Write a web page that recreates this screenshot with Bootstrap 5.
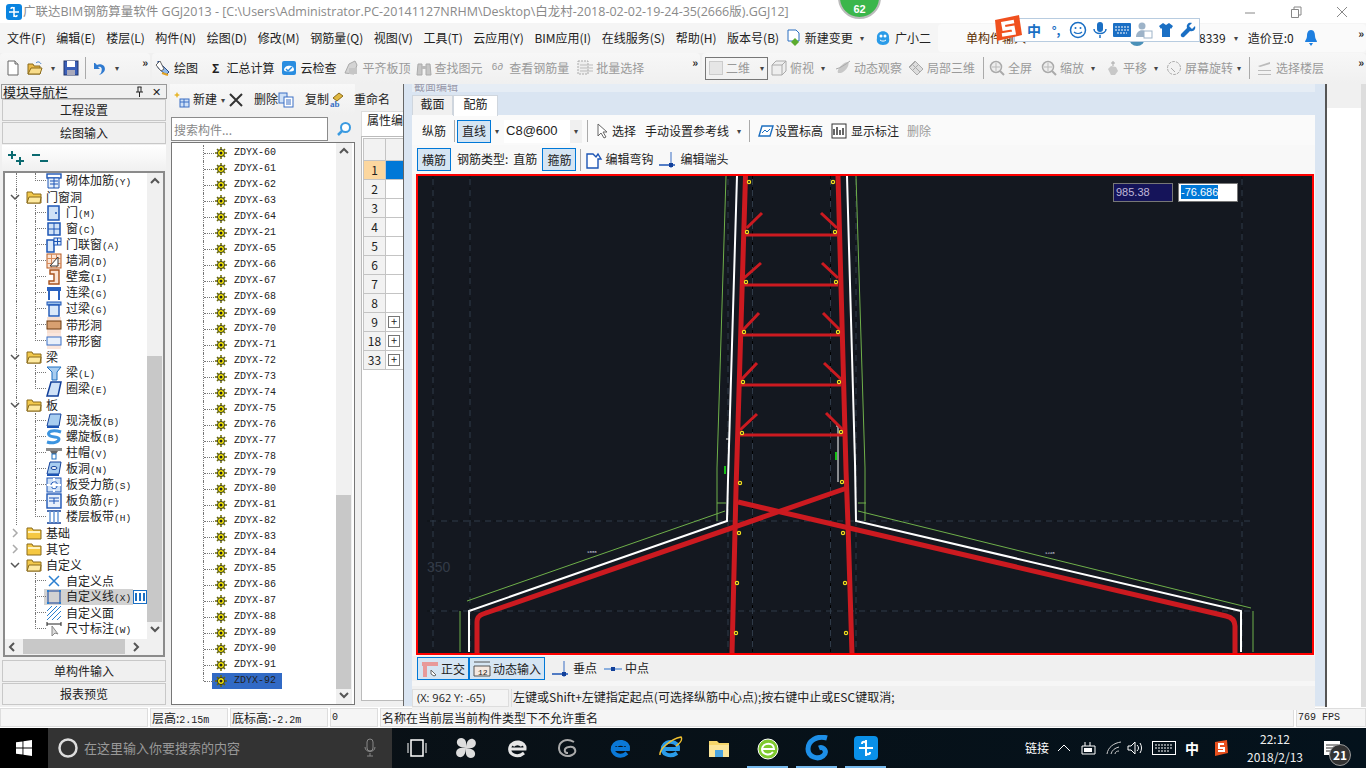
<!DOCTYPE html>
<html lang="zh-CN">
<head>
<meta charset="UTF-8">
<title>广联达BIM钢筋算量软件 GGJ2013</title>
<link href="https://cdn.jsdelivr.net/npm/bootstrap@5.3.0/dist/css/bootstrap.min.css" rel="stylesheet">
<style>
html,body{width:1366px;height:768px;overflow:hidden}
body{font-family:"Noto Sans CJK SC","Liberation Sans",sans-serif;font-size:12px;color:#222;background:#f0f0f0;line-height:1.2}
svg{flex:none;display:block}
.sp0{margin-left:0}.sp1{margin-left:1px}.sp2{margin-left:2px}.sp3{margin-left:3px}.sp4{margin-left:4px}.sp5{margin-left:5px}.sp6{margin-left:6px}.sp7{margin-left:7px}.sp8{margin-left:8px}.sp9{margin-left:9px}.sp10{margin-left:10px}.sp14{margin-left:14px}.sp16{margin-left:16px}.sp19{margin-left:19px}.sp53{margin-left:53px}.sp135{margin-left:135px}
.app-shell{width:1366px;height:768px;position:relative}
.title-bar{height:23px;background:#fff;color:#8a8a8a;padding-left:6px;gap:1px;font-family:"Open Sans","Noto Sans CJK SC",sans-serif;font-size:12.5px;white-space:nowrap}
.win-ctl{margin-left:auto;gap:32px;padding-right:17px}
.menu-bar{height:30px;background:#f5f5f5;padding-left:7px;gap:10.6px;white-space:nowrap;position:relative}
.menu-bar .pull-a{margin-left:-6px}
.menu-bar .pull-b{margin-left:-4px}
.menu-side{position:absolute;left:938px;top:1px;width:428px;height:28px;background:#fafafa;border-radius:4px;padding-left:28px}
.side-name{color:#5a2d00}
.menu-tail{position:absolute;right:0;top:0;height:28px;left:190px}
.tool-bar{height:30px;background:#f0f0f0;white-space:nowrap;gap:2px}
.tool-grp{height:30px;background:linear-gradient(#f7f7f7,#f0f0f0);border-radius:4px;padding-left:3px}
.grp-a{width:150px;padding-left:5px}.grp-b{width:548px}.grp-c{width:664px}
.muted-t{color:#9a9a9a}
.t-item{display:flex;align-items:center;gap:3px}
.caret-d{font-size:8px;color:#444;width:10px;text-align:center;line-height:1;flex:none}
.more-g{font-size:11px;font-weight:700;letter-spacing:-1px;margin-left:auto;padding-right:3px;align-self:flex-start;padding-top:3px;color:#222}
.t-sep{width:1px;height:22px;background:#aaa;flex:none}
.view-select{width:63px;height:23px;border:1px solid #777;gap:3px;padding-left:3px;color:#999}
.main-area{height:624px;position:relative;padding-top:1px}
.left-pane{width:167px;margin-right:3px;flex:none}
.pane-title{height:15px;border:1px solid #999;background:#f0f0f0;font-size:13px;line-height:13px;padding-left:1px;margin-left:1px}
.pane-x{margin-left:auto;gap:8px;padding-right:5px;font-size:11px;align-items:center}
.side-btn{height:22px;width:164px;margin-left:2px;margin-bottom:1px;background:#f0f0f0;border:1px solid #c8c8c8;border-radius:0;padding:0;font-size:12px;color:#222;line-height:20px}
.tree-tools{height:26px;margin:1px 0 0 2px;width:164px;background:linear-gradient(#fff,#f0f0f0);padding-left:5px;gap:6px}
.tree-box{height:486px;width:162px;margin:0 0 3px 3px;border:2px solid #8b8b8b;background:#fff;position:relative}
.tree-body{height:468px;overflow:hidden;width:143px}
.tree-row{height:16px;position:relative;white-space:nowrap;gap:4px}
.tree-row.lv1{padding-left:3px}
.tree-row.lv2{padding-left:41px}
.tree-row.vline::before{content:"";position:absolute;left:11px;top:0;bottom:0;border-left:1px dotted #777}
.tree-row.lv2::after{content:"";position:absolute;left:30px;top:0;width:11px;height:8px;border-left:1px dotted #777;border-bottom:1px dotted #777}
.conn-cont{position:absolute;left:30px;top:8px;bottom:0;border-left:1px dotted #777}
.key-t{font-family:"Liberation Mono",monospace;font-size:9.5px}
.row-hot{background:#d2d2d2;height:16px;gap:4px;margin-left:-2px;padding-left:2px;width:89px}
.hot-tail{margin-left:-4px}
.scroll-v{position:absolute;right:0;top:0;width:16px;height:468px;background:#f0f0f0}
.scroll-thumb{position:absolute;left:0;width:15px;background:#c8c8c8}
.thumb-nav{top:183px;height:266px}
.thumb-navh{left:18px;top:0;width:102px;height:15px}
.thumb-list{top:352px;height:194px}
.scroll-h{position:absolute;left:0;right:0;bottom:0;height:16px;background:#f0f0f0}
.arrow-g{position:absolute}
.ar-up{left:2px;top:4px}.ar-dn-a{left:2px;top:452px}.ar-dn-b{left:2px;top:548px}.ar-l{left:3px;top:2px}.ar-r{left:127px;top:2px}
.mid-pane{width:185px;flex:none}
.mid-tools{height:31px;padding:0 0 0 4px;white-space:nowrap;background:linear-gradient(#f8f8f8,#f0f0f0)}
.find-row{height:24px;margin:2px 0 1px 1px;gap:1px}
.find-row .find-input{width:157px;flex:none;height:24px;border:1px solid #8b8b8b;border-radius:0;padding:0 2px;font-size:12px;color:#888;min-height:0}
.find-input::placeholder{color:#888}
.list-box{height:563px;border:1px solid #777;background:#fff;position:relative;margin-left:1px}
.zd-row{height:16px;padding-left:43px;gap:7px;font-family:"Liberation Mono",monospace;font-size:10px;position:relative;color:#222;width:110px;white-space:nowrap}
.zd-row::before{content:"";position:absolute;left:31px;top:0;bottom:0;border-left:1px dotted #777}
.zd-row::after{content:"";position:absolute;left:32px;top:8px;width:10px;border-top:1px dotted #777}
.zd-row.last-z::before{bottom:8px}
.zd-row.on{background:linear-gradient(90deg,transparent 40px,#316ac5 40px)}
.list-inner{padding-top:2px;height:100%;overflow:hidden}
.list-scroll{position:absolute;right:2px;top:0;bottom:0;width:16px;background:#f0f0f0}
.prop-pane{width:0;flex:1 1 auto;padding:27px 0 0 6px}
.prop-tab{width:60px;height:25px;background:#fff;border:1px solid #ddd;border-bottom:0;padding:1px 5px;white-space:nowrap}
.grid-wrap{background:#fff;border:1px solid #bbb;padding:1px 0 0 1px;height:565px}
.grid-t{width:60px;border-collapse:collapse;table-layout:fixed;margin:0}
.grid-t td{height:19px;padding:0;border:1px solid #c4c4c4;text-align:center;background:#fff}
.grid-t .num-c{width:22px;background:#f2f2f2}
.grid-t .num-on{background:#fcd79f}
.grid-t .cell-on{background:#0078d7}
.grid-t .plain-c{text-align:left;padding-left:2px}
.grid-t .head-r td{height:22px;background:#f2f2f2}
.plus-box{display:block;width:12px;height:12px;border:1px solid #777;line-height:9px;font-size:11px;background:#fff;text-align:center}
.far-pane{width:41px;flex:none;border-left:2px solid #555;background:linear-gradient(#f0f0f0 24px,#fff 24px);border-right:5px solid #ddd;position:relative}
.edit-dialog{position:absolute;left:403px;top:1px;width:922px;height:622px;background:#dae5f2;border-left:1px solid #666;padding:0 10px 0 8px}
.dlg-cap{height:8px;font-size:11px;color:#99a;overflow:hidden;line-height:5px;padding-left:2px;background:#e6edf5}
.dlg-tabs{height:20px;margin-top:3px}
.dlg-tab{width:41px;height:20px;text-align:center;background:#f0f0f0;border:1px solid #cfd6de;border-bottom:0;padding-top:1px}
.dlg-tab.active-t{background:#fff;width:45px;height:21px;position:relative;z-index:1}
.dlg-body{background:#f6f6f6;height:592px}
.cmd-a{height:30px;padding:2px 0 0 10px;white-space:nowrap;background:#fafafa}
.cmd-b{height:29px;padding:0 0 0 5px;white-space:nowrap;background:#f8f8f8}
.tog-btn{background:#d5e5f3;border:1px solid #0078d7;border-radius:0;padding:0 4px;height:23px;line-height:20px;font-size:12px;color:#222;flex:none}
.rebar-sel{width:78px;height:23px;background:#fff;font-family:"Liberation Sans",sans-serif;padding-left:2px;font-size:13px}
.rebar-sel .caret-d{margin-left:auto;background:#f0f0f0;height:23px;line-height:23px;width:12px}
.cad-wrap{width:898px;height:481px;border:2px solid #f00;margin-left:4px;background:#141820;display:block;overflow:hidden}
.cad-wrap svg{width:894px;height:477px}
.dyn-a,.dyn-b{position:absolute;top:99px;width:60px;height:19px;border:1px solid #777;font-family:"Liberation Sans",sans-serif;font-size:11px;line-height:17px;padding-left:2px}
.dyn-a{left:709px;background:#15145a;color:#c0b8d8}
.dyn-b{left:774px;background:#fff;color:#fff}
.dyn-b span{background:#0078d7;padding:1px 0}
.snap-row{height:25px;margin-top:1px;padding-left:5px;white-space:nowrap;background:#f0f0f0}
.snap-row .tog-btn{height:23px;padding:0 3px;gap:2px;display:flex;align-items:center}
.hint-row{height:24px;margin-top:5px;gap:2px;white-space:nowrap;background:#f0f0f0}
.hint-xy{width:97px;height:18px;background:#f4f4f4;border:1px solid #ddd;padding-left:4px;font-family:"Open Sans",sans-serif;font-size:11px;line-height:16px}
.hint-msg{padding-left:1px;border-left:1px solid #ddd;height:18px;line-height:16px}
.stat-bar{height:21px;padding-top:1px;gap:2px;background:#fff}
.stat-cell{height:19px;background:#f5f5f5;border:1px solid #ddd;padding-left:1px;white-space:nowrap;line-height:17px}
.stat-mono{font-family:"Liberation Mono",monospace;font-size:10px}
.sc-a{width:148px}.sc-b{width:78px}.sc-c{width:98px}.sc-d{width:48px}.sc-e{width:914px}.sc-f{width:70px}
.task-bar{height:40px;background:linear-gradient(90deg,#0b1014,#04121c);color:#fff;position:relative}
.start-btn{width:48px;height:40px;background:#000;flex:none}
.search-box{width:344px;height:40px;background:#333;color:#999;padding-left:9px;gap:5px;font-size:13px;flex:none}
.task-apps{padding-left:13px}
.task-app{width:49px;height:40px;position:relative;flex:none}
.task-app.first-a{width:36px}
.task-app.run-on::after{content:"";position:absolute;left:4px;right:4px;bottom:0;height:2px;background:#76b9ed}
.tray-zone{font-size:12px}
.tray-zh{font-size:14px;font-weight:700;width:14px}
.clock-t{text-align:center;font-size:12px;line-height:18px;width:60px;color:#eee}
.float-badge{position:absolute;left:838px;top:-24px;width:43px;height:43px;border-radius:50%;background:#3bb64b;border:2px solid #bbb;color:#fff;font-weight:700;font-size:11px;text-align:center;padding-top:25px;font-family:"Liberation Sans",sans-serif;line-height:12px}
.ime-bar{position:absolute;left:1014px;top:18px;width:186px;height:24px;background:#fff;border:1px solid #b8cce0;padding-left:8px;color:#1a6fc4;font-weight:700}
.ime-cell{width:22px;display:flex;align-items:center;justify-content:center;flex:none}
.ime-zh{font-size:14px}
.ime-logo{position:absolute;left:993px;top:14px}
.notif-b{position:absolute;left:1329px;top:16px;width:22px;height:22px;border-radius:50%;background:#333;border:1px solid #999;font-size:12px;font-weight:700;text-align:center;line-height:20px}
</style>
</head>
<body>
<svg width="0" height="0" class="position-absolute">
<defs>
<symbol id="i-folder" viewBox="0 0 16 16"><path d="M1 3h5l1 2h8v9H1z" fill="#f2c94c" stroke="#8a6a1a"/><path d="M1 14l2-6h12l-1 6z" fill="#fde9a0" stroke="#8a6a1a"/></symbol>
<symbol id="i-shut" viewBox="0 0 16 16"><path d="M1 3h5l1 2h8v9H1z" fill="#f5c842" stroke="#8a6a1a"/><path d="M2 6h12v2H2z" fill="#fff3c0"/></symbol>
<symbol id="i-door" viewBox="0 0 16 16"><rect x="2" y="1" width="11" height="14" fill="#cfe1f7" stroke="#1d55b5" stroke-width="1.5"/><circle cx="10" cy="8" r="1" fill="#1d55b5"/></symbol>
<symbol id="i-win" viewBox="0 0 16 16"><rect x="2" y="2" width="12" height="12" fill="#cfe1f7" stroke="#1d55b5" stroke-width="1.5"/><path d="M8 2v12M2 8h12" stroke="#1d55b5"/></symbol>
<symbol id="i-doorwin" viewBox="0 0 16 16"><rect x="1" y="3" width="7" height="12" fill="#dbe9fa" stroke="#1d55b5" stroke-width="1.5"/><rect x="8" y="1" width="7" height="7" fill="#dbe9fa" stroke="#1d55b5"/><path d="M11.500 1v7M8 4.500h7" stroke="#1d55b5"/></symbol>
<symbol id="i-masonry" viewBox="0 0 16 16"><rect x="1" y="1" width="14" height="4" fill="#fff" stroke="#1d55b5" stroke-width="1.400"/><path d="M2 5h11v10H2zM4 8h8M4 11h8M8 5v10" fill="#e6f0fb" stroke="#1d55b5"/></symbol>
<symbol id="i-hole" viewBox="0 0 16 16"><rect x="1" y="1" width="14" height="14" fill="#fbe4d4" stroke="#b85a20"/><path d="M1 5.500h14M1 10.500h14M5.500 1v14M10.500 1v14" stroke="#d88a5a"/><path d="M4 13l8-9v9z" fill="#fff" stroke="#333"/></symbol>
<symbol id="i-niche" viewBox="0 0 16 16"><path d="M4 1h9v14H3v-3h5V5H4z" fill="#fbe4d4" stroke="#a8521c" stroke-width="1.4"/></symbol>
<symbol id="i-lintel" viewBox="0 0 16 16"><rect x="1" y="2" width="14" height="4" fill="#2a62c0"/><path d="M3 6v9M13 6v9" stroke="#2a62c0" stroke-width="2"/></symbol>
<symbol id="i-over" viewBox="0 0 16 16"><rect x="1" y="1" width="14" height="3" fill="#9cc0ea" stroke="#1d55b5"/><rect x="3" y="4" width="10" height="11" fill="#dbe9fa" stroke="#1d55b5" stroke-width="1.4"/></symbol>
<symbol id="i-strip" viewBox="0 0 16 16"><rect x="1" y="0" width="14" height="16" fill="#f8dfd0"/><rect x="1" y="4" width="14" height="8" fill="#d8a070" stroke="#6a3a10"/></symbol>
<symbol id="i-stripw" viewBox="0 0 16 16"><rect x="1" y="0" width="14" height="16" fill="#fbe6dc"/><rect x="1" y="4" width="14" height="8" fill="#e8f0fb" stroke="#3a6fc4"/></symbol>
<symbol id="i-beam" viewBox="0 0 16 16"><path d="M1 2h14l-4 5v8H6V7z" fill="#a8cdf0" stroke="#1d6fc0"/></symbol>
<symbol id="i-ring" viewBox="0 0 16 16"><path d="M5 1h10l-3 14H1z" fill="#cfe1f7" stroke="#12409a" stroke-width="1.500"/></symbol>
<symbol id="i-slab" viewBox="0 0 16 16"><path d="M4 1h11l-2 12H1z" fill="#a8cdf0" stroke="#12409a"/><path d="M1 13h12v2H1z" fill="#1d55b5"/></symbol>
<symbol id="i-spiral" viewBox="0 0 16 16"><path d="M15 3C6 0 1 3 3 6s10 1 10 4-6 5-12 3" fill="none" stroke="#3b94e0" stroke-width="3"/></symbol>
<symbol id="i-cap" viewBox="0 0 16 16"><rect x="0" y="3" width="16" height="3" fill="#8c8c8c"/><path d="M4 6h8l-2 3H6z" fill="#666"/><rect x="6" y="9" width="4" height="5" fill="#fff" stroke="#1d6fc0"/></symbol>
<symbol id="i-slabh" viewBox="0 0 16 16"><path d="M4 1h11l-2 12H1z" fill="#a8cdf0" stroke="#12409a"/><ellipse cx="8" cy="7" rx="3" ry="1.500" fill="#fff" stroke="#12409a"/><path d="M1 13h12v2H1z" fill="#1d55b5"/></symbol>
<symbol id="i-force" viewBox="0 0 16 16"><rect x="1" y="1" width="14" height="14" fill="#cfe1f7" stroke="#1d55b5"/><path d="M1 8h14M8 1v14" stroke="#fff" stroke-width="2"/><path d="M5 8c0-4 7-4 6-1M11 9c0 4-6 3-5 1" fill="none" stroke="#1d55b5"/></symbol>
<symbol id="i-neg" viewBox="0 0 16 16"><rect x="1" y="1" width="14" height="14" fill="#e8f0fb" stroke="#1d55b5" stroke-width="1.400"/><path d="M3 8h10M8 5v6M3 5h10" stroke="#1d55b5"/></symbol>
<symbol id="i-band" viewBox="0 0 16 16"><path d="M1 2h14M1 14h14" stroke="#12409a" stroke-width="1.500"/><path d="M4 2v12M8 2v12M12 2v12" stroke="#6a9ad8" stroke-width="1.500"/></symbol>
<symbol id="i-point" viewBox="0 0 16 16"><path d="M3 3l10 10M13 3L3 13" stroke="#2a7fd0" stroke-width="1.500"/></symbol>
<symbol id="i-line" viewBox="0 0 16 16"><rect x="2" y="2" width="12" height="12" fill="none" stroke="#12409a"/><path d="M1 1h2v2H1zM13 1h2v2h-2zM1 13h2v2H1zM13 13h2v2h-2z" fill="#2a7fd0"/></symbol>
<symbol id="i-face" viewBox="0 0 16 16"><path d="M1 6L6 1M1 11L11 1M1 15L15 1M6 15L15 6M11 15l4-4" stroke="#2a7fd0"/></symbol>
<symbol id="i-dim" viewBox="0 0 16 16"><path d="M1 1v4M15 1v4M1 3h14" stroke="#222"/><path d="M6 5v10l3-3 3 1z" fill="#ddd" stroke="#888"/></symbol>
<symbol id="i-gear" viewBox="0 0 12 12"><circle cx="6" cy="6" r="3.500" fill="#fff200" stroke="#222"/><circle cx="6" cy="6" r="1.500" fill="#222"/><path d="M6 0v2M6 10v2M0 6h2M10 6h2M2 2l1.400 1.400M8.600 8.600L10 10M10 2L8.600 3.400M3.400 8.600L2 10" stroke="#6a6a00" stroke-width="1.500"/></symbol>
<symbol id="i-doc" viewBox="0 0 16 16"><path d="M3 1h7l3 3v11H3z" fill="#fff" stroke="#666"/><path d="M10 1v3h3" fill="#ddd" stroke="#666"/></symbol>
<symbol id="i-open" viewBox="0 0 16 16"><path d="M1 4h5l1 2h6v8H1z" fill="#e9b949" stroke="#8a6a1a"/><path d="M1 14l3-6h11l-2 6z" fill="#f8dc8a" stroke="#8a6a1a"/><path d="M9 3c2-2 4-1 5 1" fill="none" stroke="#3a7ac8"/></symbol>
<symbol id="i-save" viewBox="0 0 16 16"><rect x="1" y="1" width="14" height="14" fill="#3a5fb8" stroke="#20356a"/><rect x="4" y="1" width="8" height="6" fill="#fff"/><rect x="4" y="10" width="8" height="5" fill="#aab"/></symbol>
<symbol id="i-undo" viewBox="0 0 16 16"><path d="M3 3v6h6L7 7c3-1 5 1 3 6l-2 2c6-2 7-6 5-9-2-2-5-2-7-1L4 3z" fill="#2f7ad0"/></symbol>
<symbol id="i-draw" viewBox="0 0 16 16"><path d="M3 1l5 5 6 6-3 3-8-7z" fill="#8fb8e8" stroke="#2a4f90"/><path d="M1 5l4-4 4 8-3 2z" fill="#fff" stroke="#666"/><path d="M7 13l6 2" stroke="#e0a020" stroke-width="2"/></symbol>
<symbol id="i-cloud" viewBox="0 0 16 16"><rect x="1" y="1" width="14" height="14" rx="2" fill="#2a8de0"/><path d="M3 10c0-5 10-6 10 0 0 2-10 2-10 0z" fill="#fff"/><path d="M5 9l2 2 4-4" fill="none" stroke="#2a8de0" stroke-width="1.500"/></symbol>
<symbol id="i-gray1" viewBox="0 0 16 16"><path d="M2 13l4-9 6-3 2 4-3 9z" fill="#d4d4d4" stroke="#aaa"/><rect x="6" y="8" width="8" height="6" fill="#c6c6c6"/></symbol>
<symbol id="i-binoc" viewBox="0 0 16 16"><path d="M2 4h4v11H1zM10 4h4l1 11h-5z" fill="#c6c6c6" stroke="#aaa"/><rect x="6" y="6" width="4" height="3" fill="#bbb"/></symbol>
<symbol id="i-batch" viewBox="0 0 16 16"><rect x="1" y="1" width="10" height="13" fill="#eee" stroke="#aaa" stroke-dasharray="2 1"/><path d="M3 5h13M3 8h13M3 11h13" stroke="#bbb"/></symbol>
<symbol id="i-cube" viewBox="0 0 16 16"><path d="M1 5l4-4h10v10l-4 4H1zM1 5h10v10M11 5l4-4" fill="#eee" stroke="#aaa"/></symbol>
<symbol id="i-orbit" viewBox="0 0 16 16"><path d="M3 13c-2-3 5-11 10-11 2 1-1 9-7 11z" fill="#c8c8c8"/><path d="M1 9c4-1 9-4 14-8" stroke="#aaa" fill="none"/></symbol>
<symbol id="i-box3" viewBox="0 0 16 16"><path d="M1 7l6-6 8 8-6 6z" fill="#ddd" stroke="#aaa"/><path d="M4 4l8 8M7 2l-5 5M10 5l-5 5" stroke="#aaa"/></symbol>
<symbol id="i-zoom" viewBox="0 0 16 16"><circle cx="7" cy="7" r="5.500" fill="#eee" stroke="#aaa" stroke-width="1.500"/><path d="M11 11l4 4" stroke="#aaa" stroke-width="2"/><path d="M3 7h8M7 3v8" stroke="#bbb"/></symbol>
<symbol id="i-hand" viewBox="0 0 16 16"><path d="M4 9l3-3 5 1 2 4-3 4H7z" fill="#c8c8c8"/><path d="M9 1v5M7 3h4" stroke="#aaa"/></symbol>
<symbol id="i-rot" viewBox="0 0 16 16"><circle cx="8" cy="8" r="6.500" fill="#f2f2f2" stroke="#aaa" stroke-dasharray="3 1"/><path d="M5 8l4 4" stroke="#aaa"/></symbol>
<symbol id="i-floors" viewBox="0 0 16 16"><path d="M1 6l12-4v2L3 7M1 10h13v1H1zM1 14h13v1H1z" fill="#bbb"/></symbol>
<symbol id="i-new" viewBox="0 0 16 16"><path d="M3 0l1 2 2 1-2 1-1 2-1-2-2-1 2-1z" fill="#e8b830"/><rect x="6" y="7" width="9" height="8" fill="#cfe1f7" stroke="#3a6fc4"/><path d="M6 10h9M10 7v8" stroke="#3a6fc4"/></symbol>
<symbol id="i-copy" viewBox="0 0 16 16"><rect x="1" y="1" width="8" height="10" fill="#cfe1f7" stroke="#3a6fc4"/><rect x="6" y="5" width="9" height="10" fill="#fff" stroke="#3a6fc4"/><path d="M8 8h5M8 10h5M8 12h5" stroke="#3a6fc4"/></symbol>
<symbol id="i-rename" viewBox="0 0 16 16"><path d="M4 6l6-5 4 3-6 5z" fill="#e0b840" stroke="#8a6a1a"/><text x="1" y="15" font-size="9" font-weight="700" fill="#3a6fc4" font-family="Liberation Serif">ab</text></symbol>
<symbol id="i-arrow" viewBox="0 0 16 16"><path d="M4 1v12l3-3 3 5 2-1-3-5h4z" fill="#fff" stroke="#666"/></symbol>
<symbol id="i-level" viewBox="0 0 18 16"><path d="M2 13L5 3h11l-3 10z" fill="#fff" stroke="#1d6fc0" stroke-width="1.400"/><path d="M5 10l3-3 2 2 3-3" fill="none" stroke="#1d6fc0"/></symbol>
<symbol id="i-note" viewBox="0 0 16 16"><rect x="1" y="1" width="14" height="14" fill="#fff" stroke="#333"/><path d="M3 12V6M6 12V4M9 12V7M12 12V5" stroke="#333" stroke-width="1.500"/></symbol>
<symbol id="i-hook" viewBox="0 0 18 18"><path d="M2 3h6l3 3 2-3 3 5h-3v9H2z" fill="#fff" stroke="#1d55b5" stroke-width="1.400"/></symbol>
<symbol id="i-perp" viewBox="0 0 18 18"><path d="M0 14h16" stroke="#1d55b5" stroke-width="1.500"/><path d="M12 1v16" stroke="#3a6fc4"/><rect x="10" y="12" width="4" height="4" fill="#12409a"/></symbol>
<symbol id="i-mid" viewBox="0 0 18 18"><path d="M0 9h18" stroke="#6a9ad8" stroke-width="1.500"/><rect x="7" y="7" width="4" height="4" fill="#12409a"/></symbol>
<symbol id="i-ortho" viewBox="0 0 18 18"><path d="M1 2h16v4H6v11H2V6H1z" fill="#e89a9a"/><path d="M10 10l5 5-2 1-3-2z" fill="#fff" stroke="#666"/></symbol>
<symbol id="i-dyn" viewBox="0 0 18 18"><path d="M1 2h16M1 6h16M1 6v10h16V6" fill="#f4e8e0" stroke="#555"/><text x="5" y="15" font-size="8" fill="#222" font-family="Liberation Mono">12</text></symbol>
<symbol id="i-mag" viewBox="0 0 16 16"><circle cx="9.500" cy="6.500" r="4.500" fill="#fff" stroke="#3a9ae0" stroke-width="2"/><path d="M6 10l-4 4" stroke="#3a9ae0" stroke-width="2.500"/></symbol>
<symbol id="c-up" viewBox="0 0 12 8"><path d="M2 6l4-4 4 4" fill="none" stroke="#555" stroke-width="2"/></symbol>
<symbol id="c-dn" viewBox="0 0 12 8"><path d="M2 2l4 4 4-4" fill="none" stroke="#555" stroke-width="2"/></symbol>
<symbol id="c-lt" viewBox="0 0 8 12"><path d="M6 2L2 6l4 4" fill="none" stroke="#555" stroke-width="2"/></symbol>
<symbol id="c-rt" viewBox="0 0 8 12"><path d="M2 2l4 4-4 4" fill="none" stroke="#555" stroke-width="2"/></symbol>
</defs>
</svg>

<div class="app-shell d-flex flex-column">
  <div class="title-bar d-flex align-items-center">
    <svg width="16" height="16" viewBox="0 0 16 16"><rect width="16" height="16" rx="3" fill="#0a84e0"/><path d="M8 3v10M3 8h10M5 5c0-2 2-2 3 0M11 11c0 2-2 2-3 0" fill="none" stroke="#fff" stroke-width="1.500"/></svg>
    <span>广联达BIM钢筋算量软件 GGJ2013 - [C:\Users\Administrator.PC-20141127NRHM\Desktop\白龙村-2018-02-02-19-24-35(2666版).GGJ12]</span>
    <div class="win-ctl d-flex align-items-center">
      <svg width="14" height="14" viewBox="0 0 14 14"><path d="M2 8h10" stroke="#888"/></svg>
      <svg width="14" height="14" viewBox="0 0 14 14"><path d="M2.500 4.500h7v8h-7zM5 4V2h7v8h-2" fill="none" stroke="#888"/></svg>
      <svg width="14" height="14" viewBox="0 0 14 14"><path d="M2 2l10 10M12 2L2 12" stroke="#888"/></svg>
    </div>
  </div>

  <div class="menu-bar d-flex align-items-center">
    <span>文件(F)</span><span>编辑(E)</span><span>楼层(L)</span><span>构件(N)</span><span>绘图(D)</span><span>修改(M)</span><span>钢筋量(Q)</span><span>视图(V)</span><span>工具(T)</span><span>云应用(Y)</span><span>BIM应用(I)</span><span>在线服务(S)</span><span>帮助(H)</span><span>版本号(B)</span>
    <span class="t-item pull-b"><svg width="16" height="18" viewBox="0 0 16 18"><path d="M2 1h8l3 3v8H2z" fill="#fff" stroke="#2a6fc0"/><path d="M9 9l4 4-4 4-4-4z" fill="#5bab2f"/></svg>新建变更</span><span class="caret-d pull-a">▾</span>
    <span class="t-item pull-b"><svg width="18" height="18" viewBox="0 0 18 18"><path d="M3 9c-1-9 13-9 12 0 1 4-1 7-6 7s-7-3-6-7z" fill="#2a9be8"/><circle cx="7" cy="7" r="1.500" fill="#fff"/><circle cx="11" cy="7" r="1.500" fill="#fff"/><path d="M6 11c2 1.500 4 1.500 6 0" stroke="#fff" fill="none"/></svg>广小二</span>
    <div class="menu-side d-flex align-items-center">
      <span class="side-name">单构件输入</span>
      <div class="menu-tail d-flex align-items-center">
        <svg width="18" height="18" viewBox="0 0 18 18"><circle cx="9" cy="9" r="8" fill="#4a90b8"/></svg>
        <span class="sp53">8339</span><span class="caret-d sp5">▾</span><span class="sp7">造价豆:0</span>
        <svg class="sp10" width="14" height="18" viewBox="0 0 14 18"><path d="M7 1c3 0 4 3 4 6 0 3 2 4 2 6H1c0-2 2-3 2-6 0-3 1-6 4-6zM5 14h4l-2 3z" fill="#1d7fe0"/></svg>
        <span class="more-g">»</span>
      </div>
    </div>
  </div>

  <div class="tool-bar d-flex">
    <div class="tool-grp grp-a d-flex align-items-center">
      <svg width="16" height="16"><use href="#i-doc"/></svg>
      <svg class="sp6" width="16" height="16"><use href="#i-open"/></svg><span class="caret-d sp5">▾</span>
      <svg class="sp5" width="16" height="16"><use href="#i-save"/></svg>
      <span class="t-sep sp6"></span>
      <svg class="sp5" width="16" height="16"><use href="#i-undo"/></svg><span class="caret-d sp5">▾</span>
      <span class="more-g">»</span>
    </div>
    <div class="tool-grp grp-b d-flex align-items-center">
      <span class="t-item"><svg width="16" height="16"><use href="#i-draw"/></svg>绘图</span>
      <span class="t-item sp10"><b class="px-1">Σ</b>汇总计算</span>
      <span class="t-item sp7"><svg width="16" height="16"><use href="#i-cloud"/></svg>云检查</span>
      <span class="t-item sp7 muted-t"><svg width="16" height="16"><use href="#i-gray1"/></svg>平齐板顶</span>
      <span class="t-item sp5 muted-t"><svg width="16" height="16"><use href="#i-binoc"/></svg>查找图元</span>
      <span class="t-item sp9 muted-t"><span class="stat-mono">6∂</span>&nbsp;查看钢筋量</span>
      <span class="t-item sp8 muted-t"><svg width="16" height="16"><use href="#i-batch"/></svg>批量选择</span>
      <span class="more-g">»</span>
    </div>
    <div class="tool-grp grp-c d-flex align-items-center">
      <div class="view-select d-flex align-items-center"><svg width="14" height="14" viewBox="0 0 14 14"><rect x=".5" y=".5" width="13" height="13" fill="#e6e6e6" stroke="#ccc"/></svg>二维<span class="caret-d ms-auto">▾</span></div>
      <span class="t-item sp3 muted-t"><svg width="16" height="16"><use href="#i-cube"/></svg>俯视</span><span class="caret-d sp4">▾</span>
      <span class="t-item sp7 muted-t"><svg width="16" height="16"><use href="#i-orbit"/></svg>动态观察</span>
      <span class="t-item sp6 muted-t"><svg width="16" height="16"><use href="#i-box3"/></svg>局部三维</span>
      <span class="t-sep sp8"></span>
      <span class="t-item sp5 muted-t"><svg width="16" height="16"><use href="#i-zoom"/></svg>全屏</span>
      <span class="t-item sp9 muted-t"><svg width="16" height="16"><use href="#i-zoom"/></svg>缩放</span><span class="caret-d sp4">▾</span>
      <span class="t-item sp6 muted-t"><svg width="16" height="16"><use href="#i-hand"/></svg>平移</span><span class="caret-d sp4">▾</span>
      <span class="t-item sp5 muted-t"><svg width="16" height="16"><use href="#i-rot"/></svg>屏幕旋转</span><span class="caret-d sp1">▾</span>
      <span class="t-sep sp5"></span>
      <span class="t-item sp7 muted-t"><svg width="16" height="16"><use href="#i-floors"/></svg>选择楼层</span>
      <span class="more-g">»</span>
    </div>
  </div>

  <div class="main-area d-flex">
    <div class="left-pane">
      <div class="pane-title d-flex align-items-center">模块导航栏<div class="pane-x d-flex"><svg width="9" height="11" viewBox="0 0 9 11"><path d="M2.500 1h4M3 1v5M6 1v5M1 6h7M4.500 6v5" fill="none" stroke="#222"/></svg><span>✕</span></div></div>
      <button class="btn side-btn d-block">工程设置</button>
      <button class="btn side-btn d-block">绘图输入</button>
      <div class="tree-tools d-flex align-items-center">
        <svg width="18" height="16" viewBox="0 0 18 16"><path d="M5 1v8M1 5h8M13 7v8M9 11h8" stroke="#0b6a70" stroke-width="2"/></svg>
        <svg width="18" height="16" viewBox="0 0 18 16"><path d="M1 5h8M9 11h8" stroke="#0b6a70" stroke-width="2"/></svg>
      </div>
      <div class="tree-box">
        <div class="tree-body" id="navTree"></div>
        <div class="scroll-v">
          <svg class="arrow-g ar-up" width="12" height="8"><use href="#c-up"/></svg>
          <div class="scroll-thumb thumb-nav"></div>
          <svg class="arrow-g ar-dn-a" width="12" height="8"><use href="#c-dn"/></svg>
        </div>
        <div class="scroll-h">
          <svg class="arrow-g ar-l" width="8" height="12"><use href="#c-lt"/></svg>
          <div class="scroll-thumb thumb-navh"></div>
          <svg class="arrow-g ar-r" width="8" height="12"><use href="#c-rt"/></svg>
        </div>
      </div>
      <button class="btn side-btn d-block">单构件输入</button>
      <button class="btn side-btn d-block">报表预览</button>
    </div>

    <div class="mid-pane">
      <div class="mid-tools d-flex align-items-center">
        <span class="t-item"><svg width="16" height="16"><use href="#i-new"/></svg>新建</span><span class="caret-d sp1">▾</span>
        <span class="t-item"><svg width="16" height="16" viewBox="0 0 16 16"><path d="M2 2l12 12M14 2L2 14" stroke="#333" stroke-width="2"/></svg><span class="sp7">删除</span></span>
        <span class="t-item"><svg width="16" height="16"><use href="#i-copy"/></svg><span class="sp8">复制</span></span>
        <span class="t-item"><svg width="16" height="16"><use href="#i-rename"/></svg><span class="sp6">重命名</span></span>
      </div>
      <div class="find-row input-group flex-nowrap">
        <input type="text" class="form-control find-input" placeholder="搜索构件...">
        <span class="d-flex align-items-center ps-2"><svg width="16" height="16"><use href="#i-mag"/></svg></span>
      </div>
      <div class="list-box">
        <div class="list-inner" id="zdList"></div>
        <div class="list-scroll">
          <svg class="arrow-g ar-up" width="12" height="8"><use href="#c-up"/></svg>
          <div class="scroll-thumb thumb-list"></div>
          <svg class="arrow-g ar-dn-b" width="12" height="8"><use href="#c-dn"/></svg>
        </div>
      </div>
    </div>

    <div class="prop-pane">
      <div class="prop-tab overflow-hidden">属性编辑</div>
      <div class="grid-wrap overflow-hidden"><table class="grid-t" id="propGrid"></table></div>
    </div>
    <div class="far-pane"></div>

    <div class="edit-dialog">
      <div class="dlg-cap">截面编辑</div>
      <div class="dlg-tabs d-flex">
        <div class="dlg-tab">截面</div><div class="dlg-tab active-t">配筋</div>
      </div>
      <div class="dlg-body">
        <div class="cmd-a d-flex align-items-center">
          <span>纵筋</span><span class="t-sep sp8"></span>
          <button class="btn tog-btn sp2">直线</button><span class="caret-d sp1">▾</span>
          <div class="rebar-sel d-flex align-items-center sp2">C8@600<span class="caret-d">▾</span></div>
          <span class="t-sep sp5"></span>
          <svg class="sp6" width="16" height="18"><use href="#i-arrow"/></svg><span class="sp2">选择</span>
          <span class="sp9">手动设置参考线</span><span class="caret-d sp5">▾</span>
          <span class="t-sep sp5"></span>
          <svg class="sp7" width="18" height="16"><use href="#i-level"/></svg><span>设置标高</span>
          <svg class="sp8" width="16" height="16"><use href="#i-note"/></svg><span class="sp4">显示标注</span>
          <span class="muted-t sp8">删除</span>
        </div>
        <div class="cmd-b d-flex align-items-center">
          <button class="btn tog-btn">横筋</button>
          <span class="sp6">钢筋类型:</span><span class="sp5">直筋</span>
          <button class="btn tog-btn sp5">箍筋</button>
          <span class="t-sep sp4"></span>
          <svg class="sp4" width="18" height="18"><use href="#i-hook"/></svg><span class="sp2">编辑弯钩</span>
          <svg class="sp6" width="18" height="18"><use href="#i-perp"/></svg><span class="sp3">编辑端头</span>
        </div>
        <div class="cad-wrap">
          <svg viewBox="418 176 894 477">
            <g fill="none" stroke="#2f3a48" stroke-width="1" stroke-dasharray="9 2">
              <path d="M433 176V652M470 176V652M728 176V652M752.500 176V652M830.500 176V652M856 176V652M1242 176V652M427 521H1250M427 611H1250"/>
            </g>
            <g fill="none" stroke="#000" stroke-width="1" stroke-dasharray="3 8">
              <path d="M433 176V652M470 176V652M728 176V652M752.500 176V652M830.500 176V652M856 176V652M1242 176V652M427 521H1250M427 611H1250"/>
            </g>
            <text x="427" y="572" font-size="14" fill="#333b47" font-family="Liberation Sans">350</text>
            <g fill="none" stroke="#6fb04a" stroke-width="1">
              <path d="M726 176L717 468V521M856 176L865 468V521M467 601L725 511M858 511L1251 608M460 611V652M1253 611V652M717 503H726M858 503H866"/>
            </g>
            <g fill="none" stroke="#fff" stroke-width="2">
              <path d="M737 176L728 480L727 521L469 611V652M847 176L855 463L856 521L1241 611V652"/>
              <path d="M726 439h4M836 426h4M838 426V482" stroke-width="1"/>
            </g>
            <text x="587" y="553" font-size="4" fill="#dde" font-family="Liberation Mono">1030</text>
            <text x="1045" y="554" font-size="4" fill="#dde" font-family="Liberation Mono">1240</text>
            <path d="M724 466h2v8h-2zM835 452h2v8h-2z" fill="#15c015"/>
            <g fill="none" stroke="#cc1a20" stroke-linejoin="round">
              <path stroke-width="5" d="M745.500 176L736 490L732 654M838 176L846 470L848 525L852 654"/>
              <path stroke-width="5" d="M477 654V622Q477 616 483 614L847 488M738 502L1226 616Q1235 618 1235 626V654"/>
              <path stroke-width="3" d="M745 235H837M744 285H838M742 335H840M741 385H841M738 435H843"/>
              <path stroke-width="3" d="M746.700 228L762 213M744 278L761 263M743 330L759 313M741 380L757 363M740 430L757 414M837 228L821 213M838 278L822 263M840 330L823 313M842 380L824 363M843 430L826 413"/>
            </g>
            <g fill="#141820" stroke="#f5e020" stroke-width="1.200" id="dotsG"></g>
          </svg>
        </div>
        <div class="dyn-a">985.38</div>
        <div class="dyn-b"><span>-76.686</span></div>
        <div class="snap-row d-flex align-items-center">
          <button class="btn tog-btn"><svg width="18" height="18"><use href="#i-ortho"/></svg>正交</button>
          <button class="btn tog-btn"><svg width="18" height="18"><use href="#i-dyn"/></svg>动态输入</button>
          <span class="t-item sp7"><svg width="18" height="18"><use href="#i-perp"/></svg>垂点</span>
          <span class="t-item sp7"><svg width="18" height="18"><use href="#i-mid"/></svg>中点</span>
        </div>
        <div class="hint-row d-flex align-items-center">
          <div class="hint-xy">(X: 962 Y: -65)</div>
          <div class="hint-msg">左键或Shift+左键指定起点(可选择纵筋中心点);按右键中止或ESC键取消;</div>
        </div>
      </div>
    </div>
  </div>

  <div class="stat-bar d-flex">
    <div class="stat-cell sc-a"></div>
    <div class="stat-cell sc-b">层高:<span class="stat-mono">2.15m</span></div>
    <div class="stat-cell sc-c">底标高:<span class="stat-mono">-2.2m</span></div>
    <div class="stat-cell sc-d stat-mono">0</div>
    <div class="stat-cell sc-e">名称在当前层当前构件类型下不允许重名</div>
    <div class="stat-cell sc-f stat-mono">769 FPS</div>
  </div>

  <div class="task-bar d-flex align-items-center">
    <div class="start-btn d-flex align-items-center justify-content-center">
      <svg width="16" height="16" viewBox="0 0 16 16"><path d="M0 2.300L6.500 1.400V7.600H0zM7.400 1.300L16 0V7.600H7.400zM0 8.400H6.500V14.600L0 13.700zM7.400 8.400H16V16L7.400 14.700z" fill="#fff"/></svg>
    </div>
    <div class="search-box d-flex align-items-center">
      <svg width="22" height="22" viewBox="0 0 22 22"><circle cx="11" cy="11" r="8.500" fill="none" stroke="#ddd" stroke-width="2.500"/></svg>
      <span>在这里输入你要搜索的内容</span>
      <svg class="ms-auto me-3" width="12" height="20" viewBox="0 0 12 20"><rect x="3" y="1" width="6" height="12" rx="3" fill="none" stroke="#888"/><path d="M1 9c0 6 10 6 10 0M6 15v3M3 18h6" fill="none" stroke="#888"/></svg>
    </div>
    <div class="task-apps d-flex">
      <div class="task-app first-a d-flex align-items-center"><svg class="sp2" width="20" height="20" viewBox="0 0 20 20"><rect x="4" y="2" width="12" height="16" fill="none" stroke="#fff" stroke-width="1.500"/><path d="M1 5v10M19 5v10" stroke="#fff"/></svg></div>
      <div class="task-app d-flex align-items-center justify-content-center"><svg width="24" height="24" viewBox="0 0 24 24"><path d="M12 12C6 12 2 9 3 5s8-4 9 1zM12 12c0-6 3-10 7-9s4 8-1 9zM12 12c6 0 10 3 9 7s-8 4-9-1zM12 12c0 6-3 10-7 9s-4-8 1-9z" fill="#ddd"/></svg></div>
      <div class="task-app sp3 d-flex align-items-center justify-content-center"><svg width="24" height="24" viewBox="0 0 24 24"><path d="M4 13h15c1-8-12-10-15-2-2 7 7 12 14 6M7 10c2-3 7-3 9 0" fill="none" stroke="#e6e6e6" stroke-width="3"/></svg></div>
      <div class="task-app d-flex align-items-center justify-content-center"><svg width="22" height="22" viewBox="0 0 22 22"><path d="M18 5C10 0 3 5 3 11s7 10 13 7 3-9-3-8-5 6-1 6" fill="none" stroke="#aaa" stroke-width="2"/></svg></div>
      <div class="task-app sp5 d-flex align-items-center justify-content-center"><svg width="24" height="24" viewBox="0 0 24 24"><path d="M4 13h15c1-8-12-10-15-2-2 7 7 12 14 6M7 10c2-3 7-3 9 0" fill="none" stroke="#0a78d7" stroke-width="4"/></svg></div>
      <div class="task-app d-flex align-items-center justify-content-center"><svg width="26" height="26" viewBox="0 0 26 26"><path d="M6 14h15c1-8-12-10-15-2-2 7 7 11 14 6" fill="none" stroke="#2a9be8" stroke-width="4"/><path d="M3 20C2 14 14 4 24 2c2 3-2 7-5 9" fill="none" stroke="#f0c030" stroke-width="1.500"/></svg></div>
      <div class="task-app d-flex align-items-center justify-content-center"><svg width="24" height="24" viewBox="0 0 24 24"><path d="M2 5h8l2 2h10v14H2z" fill="#f5d66b"/><rect x="2" y="9" width="20" height="12" fill="#fbe59a"/><rect x="8" y="14" width="8" height="7" fill="#4aa3e0"/></svg></div>
      <div class="task-app run-on d-flex align-items-center justify-content-center"><svg width="24" height="26" viewBox="0 0 24 26"><circle cx="12" cy="14" r="10" fill="#7fc92f" stroke="#fff"/><path d="M6 14h12c0-7-11-7-12 0 0 6 8 7 11 3" fill="none" stroke="#fff" stroke-width="2"/></svg></div>
      <div class="task-app run-on d-flex align-items-center justify-content-center"><svg width="24" height="26" viewBox="0 0 24 26"><path d="M22 3C12 0 3 6 3 14s10 11 15 7 1-10-4-8" fill="none" stroke="#1d8fe8" stroke-width="5"/></svg></div>
      <div class="task-app run-on d-flex align-items-center justify-content-center"><svg width="24" height="24" viewBox="0 0 24 24"><rect width="24" height="24" rx="4" fill="#0a90e8"/><path d="M12 4v16M5 12h14M8 8c0-3 4-3 4 0M16 16c0 3-4 3-4 0" fill="none" stroke="#fff" stroke-width="2"/></svg></div>
    </div>
    <div class="tray-zone sp135 d-flex align-items-center">
      <span>链接</span>
      <svg class="sp8" width="14" height="14" viewBox="0 0 14 14"><path d="M1 10l6-6 6 6" fill="none" stroke="#fff"/></svg>
      <svg class="sp10" width="16" height="14" viewBox="0 0 16 14"><path d="M1 5h13v8H1zM4 1v4M9 1v4" fill="none" stroke="#fff"/><rect x="3" y="7" width="8" height="4" fill="#fff"/></svg>
      <svg class="sp9" width="16" height="14" viewBox="0 0 16 14"><path d="M1 13C2 6 8 2 15 1M5 13c1-4 4-6 8-7M9 13c0-2 2-3 4-3" fill="none" stroke="#ccc"/></svg>
      <svg class="sp5" width="16" height="14" viewBox="0 0 16 14"><path d="M1 5h3l4-4v12L4 9H1zM10 4c2 2 2 4 0 6M13 2c2 3 2 7 0 10" fill="none" stroke="#fff"/></svg>
      <svg class="sp9" width="24" height="14" viewBox="0 0 24 14"><rect x=".5" y=".5" width="23" height="13" fill="none" stroke="#fff"/><path d="M3 4h18M3 7h18M6 10h12" stroke="#fff" stroke-dasharray="2 1"/></svg>
      <span class="tray-zh sp9">中</span>
      <svg class="sp14" width="16" height="18" viewBox="0 0 16 18"><path d="M2 3l12-2 1 13-13 3z" fill="#e8501e"/><path d="M11 5H6v4h5v3H5" fill="none" stroke="#fff" stroke-width="2"/></svg>
      <div class="clock-t sp16"><div>22:12</div><div>2018/2/13</div></div>
      <svg class="sp19" width="16" height="14" viewBox="0 0 16 14"><rect width="16" height="14" fill="#fff"/><path d="M2 4h12M2 7h12M2 10h12" stroke="#333"/></svg>
    </div>
    <div class="notif-b">21</div>
  </div>

  <div class="float-badge">62</div>
  <div class="ime-bar d-flex align-items-center">
    <span class="ime-cell ime-zh">中</span><span class="ime-cell">°,</span>
    <span class="ime-cell"><svg width="18" height="18" viewBox="0 0 18 18"><circle cx="9" cy="9" r="7.500" fill="none" stroke="#1a6fc4" stroke-width="1.500"/><circle cx="6.500" cy="7" r="1" fill="#1a6fc4"/><circle cx="11.500" cy="7" r="1" fill="#1a6fc4"/><path d="M5 11c2 2 6 2 8 0" fill="none" stroke="#1a6fc4" stroke-width="1.200"/></svg></span>
    <span class="ime-cell"><svg width="14" height="18" viewBox="0 0 14 18"><rect x="4" y="1" width="6" height="10" rx="3" fill="#1a6fc4"/><path d="M1 8c0 6 12 6 12 0M7 14v3" fill="none" stroke="#1a6fc4" stroke-width="1.500"/></svg></span>
    <span class="ime-cell"><svg width="18" height="14" viewBox="0 0 18 14"><rect width="18" height="14" rx="1" fill="#1a6fc4"/><path d="M2 4h14M2 7h14M4 10h10" stroke="#fff" stroke-dasharray="2 1"/></svg></span>
    <span class="ime-cell"><svg width="18" height="18" viewBox="0 0 18 18"><circle cx="7" cy="5" r="3.500" fill="#9db3c8"/><path d="M1 16c0-9 12-9 12 0z" fill="#9db3c8"/><rect x="9" y="10" width="8" height="7" fill="#fff" stroke="#9db3c8"/></svg></span>
    <span class="ime-cell"><svg width="16" height="16" viewBox="0 0 16 16"><path d="M5 1L1 4l2 3 1-1v9h8V6l1 1 2-3-4-3-3 2z" fill="#1a6fc4"/></svg></span>
    <span class="ime-cell"><svg width="16" height="16" viewBox="0 0 16 16"><path d="M15 4l-3 3-3-3 3-3c-3-1-6 1-5 5L1 12c-1 2 1 4 3 3l6-6c4 1 6-2 5-5z" fill="#1a6fc4"/></svg></span>
  </div>
  <svg class="ime-logo" width="30" height="28" viewBox="0 0 30 28"><path d="M2 6L26 1l3 20L4 27z" fill="#f0501e"/><path d="M21 7.500L10 9.500l1 5.500 9-1.500 1 5.500-12 2" fill="none" stroke="#fff" stroke-width="3.500"/></svg>
</div>

<script src="https://cdn.jsdelivr.net/npm/bootstrap@5.3.0/dist/js/bootstrap.bundle.min.js"></script>
<script>
// 左侧导航树: [层级, 图标, 名称, 快捷键, 竖线, 连线, 收起, 选中]
const treeData = [
  [2,"i-masonry","砌体加筋","(Y)",1,0],
  [1,"i-folder","门窗洞","",1],
  [2,"i-door","门","(M)",1,1],[2,"i-win","窗","(C)",1,1],[2,"i-doorwin","门联窗","(A)",1,1],
  [2,"i-hole","墙洞","(D)",1,1],[2,"i-niche","壁龛","(I)",1,1],[2,"i-lintel","连梁","(G)",1,1],
  [2,"i-over","过梁","(G)",1,1],[2,"i-strip","带形洞","",1,1],[2,"i-stripw","带形窗","",1,0],
  [1,"i-folder","梁","",1],
  [2,"i-beam","梁","(L)",1,1],[2,"i-ring","圈梁","(E)",1,0],
  [1,"i-folder","板","",1],
  [2,"i-slab","现浇板","(B)",1,1],[2,"i-spiral","螺旋板","(B)",1,1],[2,"i-cap","柱帽","(V)",1,1],
  [2,"i-slabh","板洞","(N)",1,1],[2,"i-force","板受力筋","(S)",1,1],[2,"i-neg","板负筋","(F)",1,1],[2,"i-band","楼层板带","(H)",1,0],
  [1,"i-shut","基础","",0,0,1],[1,"i-shut","其它","",0,0,1],
  [1,"i-folder","自定义","",0],
  [2,"i-point","自定义点","",0,1],[2,"i-line","自定义线","(X)",0,1,0,1],[2,"i-face","自定义面","",0,1],[2,"i-dim","尺寸标注","(W)",0,0]
];
document.getElementById("navTree").innerHTML = treeData.map(r => {
  const [lv, ico, name, key, vline, cont, shut, hot] = r;
  const chev = lv === 1
    ? `<svg width="14" height="14" viewBox="0 0 14 14"><path d="${shut ? "M5 3l4 4-4 4" : "M3 5l4 4 4-4"}" fill="none" stroke="${shut ? "#aaa" : "#555"}" stroke-width="1.500"/></svg>` : "";
  const keyTxt = key ? `<span class="key-t">${key}</span>` : "";
  const icon = `<svg width="16" height="16"><use href="#${ico}"/></svg>`;
  const body = hot
    ? `<span class="row-hot d-flex align-items-center">${icon}<span>${name}${keyTxt}</span></span><svg class="hot-tail" width="14" height="14" viewBox="0 0 14 14"><rect x=".5" y=".5" width="13" height="13" fill="#fff" stroke="#1a6fc4"/><path d="M3 3v8M7 3v8M11 3v8" stroke="#1a6fc4" stroke-width="2"/></svg>`
    : `${icon}<span>${name}${keyTxt}</span>`;
  return `<div class="tree-row d-flex align-items-center lv${lv}${vline ? " vline" : ""}">${cont ? '<i class="conn-cont"></i>' : ""}${chev}${body}</div>`;
}).join("");

// 构件列表
const zdNames = ["60","61","62","63","64","21"];
for (let n = 65; n <= 92; n++) zdNames.push(String(n));
document.getElementById("zdList").innerHTML = zdNames.map((n, i) => {
  const last = i === zdNames.length - 1;
  return `<div class="zd-row d-flex align-items-center${last ? " on last-z" : ""}"><svg width="12" height="12"><use href="#i-gear"/></svg><span>ZDYX-${n}</span></div>`;
}).join("");

// 属性表
let gridHtml = '<tr class="head-r"><td class="num-c"></td><td></td></tr>';
[1,2,3,4,5,6,7,8,9,18,33].forEach((n, i) => {
  const plus = n >= 9 ? '<span class="plus-box">+</span>' : "";
  gridHtml += `<tr><td class="num-c${i === 0 ? " num-on" : ""}">${n}</td><td class="${i === 0 ? "cell-on" : "plain-c"}">${plus}</td></tr>`;
});
document.getElementById("propGrid").innerHTML = gridHtml;

// 图纸上的黄点
const dots = [[749,182],[747,232],[746,282],[744,332],[743,382],[742,433],[833,182],[835,232],[836,282],[838,332],[839,382],[841,432],
  [740,483],[842,482],[739,533],[843,533],[737,583],[845,583],[736,633],[846,633]];
document.getElementById("dotsG").innerHTML = dots.map(d => `<circle cx="${d[0]}" cy="${d[1]}" r="1.600"/>`).join("");
</script>
</body>
</html>
